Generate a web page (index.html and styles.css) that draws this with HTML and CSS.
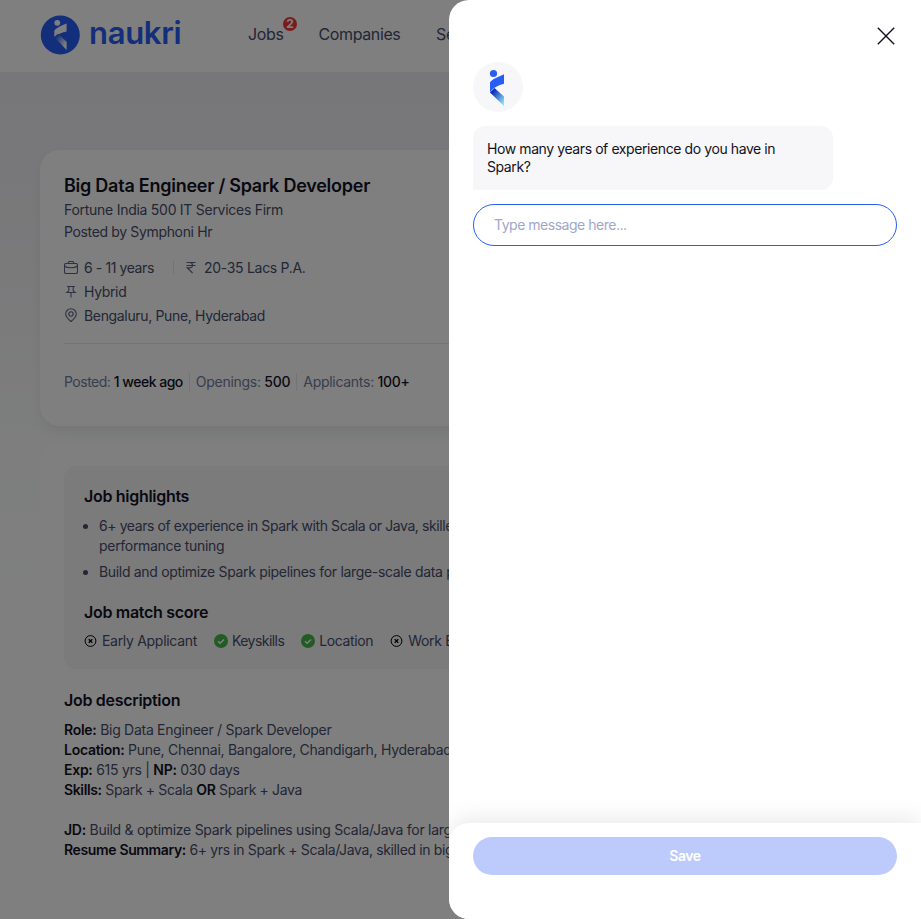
FILE: index.html
```html
<!DOCTYPE html>
<html lang="en">
<head>
<meta charset="utf-8">
<title>Big Data Engineer / Spark Developer</title>
<link rel="stylesheet" href="styles.css">
</head>
<body>
<svg class="defs" width="0" height="0">
  <defs>
    <linearGradient id="leg" x1="0" y1="0" x2="1" y2="1"><stop offset=".2" stop-color="#0a2cb8"/><stop offset=".9" stop-color="#8fe0f5"/></linearGradient>
    <linearGradient id="legLight" x1="0" y1="0" x2="1" y2="1"><stop offset=".15" stop-color="#275df5"/><stop offset=".8" stop-color="#fff"/></linearGradient>
    <symbol id="cross" viewBox="0 0 14 14"><circle cx="6.500" cy="7" r="5.400" fill="none" stroke="#000" stroke-width="1"/><path d="M4.700 5.200l3.600 3.600M8.300 5.200l-3.600 3.600" stroke="#000" stroke-width="1.300"/></symbol>
    <symbol id="check" viewBox="0 0 14 14"><circle cx="7" cy="7" r="7" fill="#47b749"/><path d="M4 7.200l2.100 2L10 5.400" fill="none" stroke="#fff" stroke-width="1.400"/></symbol>
  </defs>
</svg>
<div class="page">
  <header class="header">
    <div class="brand">
      <svg width="40" height="40" viewBox="0 0 40 40"><circle cx="20.300" cy="20" r="19.500" fill="#275df5"/><circle cx="17.300" cy="7.800" r="2.900" fill="#fff"/><path d="M14.300 22V15.500Q17 12 26.600 8.500V16.500Q18 18.500 14.300 22z" fill="#fff"/><path d="M14.300 22L18 18.800 26.600 26.700V35z" fill="url(#legLight)"/></svg>
      <span class="wordmark">naukri</span>
    </div>
    <nav class="nav">
      <a class="nav-jobs">Jobs<span class="badge">2</span></a>
      <a class="nav-companies">Companies</a>
      <a>Services</a>
    </nav>
  </header>
  <main class="content">
    <section class="card summary">
      <h1>Big Data Engineer / Spark Developer</h1>
      <p class="company">Fortune India 500 IT Services Firm</p>
      <p class="poster">Posted by Symphoni Hr</p>
      <div class="facts">
        <div class="fact">
          <svg width="14" height="14" viewBox="0 0 14 14"><rect x=".5" y="3.500" width="13" height="10" rx="1.500"/><path d="M4.300 3.500V2.500a1 1 0 0 1 1-1h3.400a1 1 0 0 1 1 1v1M.5 6C3 8.300 11 8.300 13.500 6"/></svg>
          <span class="exp">6 - 11 years</span><i class="rule"></i>
          <svg width="14" height="14" viewBox="0 0 14 14"><path d="M2.500 2.500h9M2.500 5.500h9M3 2.500h2.500c4 0 4 5.400 0 5.400H3.200L8.600 13"/></svg>
          <span class="salary">20-35 Lacs P.A.</span>
        </div>
        <div class="fact">
          <svg width="14" height="14" viewBox="0 0 14 14"><path d="M3 2.500h8M4.800 2.500v4.300L2.800 8.500h8.400L9.200 6.800V2.500M7 8.500V13.500"/></svg>
          <span class="mode">Hybrid</span>
        </div>
        <div class="fact">
          <svg width="14" height="14" viewBox="0 0 14 14"><path d="M7 13.500C4.500 11.400 1.700 9.200 1.700 6a5.300 5.300 0 0 1 10.600 0c0 3.200-2.800 5.400-5.300 7.500z"/><circle cx="7" cy="6" r="2.200"/></svg>
          <span class="places">Bengaluru, Pune, Hyderabad</span>
        </div>
      </div>
      <div class="stats">
        <span>Posted: <b>1 week ago</b></span><span>Openings: <b>500</b></span><span>Applicants: <b>100+</b></span>
      </div>
    </section>
    <section class="card details">
      <div class="highlights">
        <h2>Job highlights</h2>
        <ul>
          <li>6+ years of experience in Spark with Scala or Java, skilled in<br><span class="tail">performance tuning</span></li>
          <li>Build and optimize Spark pipelines for large-scale data processing</li>
        </ul>
        <h2>Job match score</h2>
        <div class="score">
          <span><svg width="14" height="14"><use href="#cross"/></svg>Early Applicant</span>
          <span class="keyskills"><svg width="14" height="14"><use href="#check"/></svg>Keyskills</span>
          <span class="location"><svg width="14" height="14"><use href="#check"/></svg>Location</span>
          <span><svg width="14" height="14"><use href="#cross"/></svg>Work Experience</span>
        </div>
      </div>
      <h2 class="jd-title">Job description</h2>
      <div class="jd">
        <p><b>Role:</b> Big Data Engineer / Spark Developer</p>
        <p><b>Location:</b> Pune, Chennai, Bangalore, Chandigarh, Hyderabad</p>
        <p><b>Exp:</b> 615 yrs | <b>NP:</b> 030 days</p>
        <p class="skills"><b>Skills:</b> Spark + Scala <b>OR</b> Spark + Java</p>
        <p class="gap"><b>JD:</b> Build &amp; optimize Spark pipelines using Scala/Java for large-scale data</p>
        <p class="resume"><b>Resume Summary:</b> 6+ yrs in Spark + Scala/Java, skilled in big data</p>
      </div>
    </section>
  </main>
</div>
<div class="overlay"></div>
<aside class="drawer">
  <div class="chat">
    <div class="close"><svg width="18" height="18" viewBox="0 0 18 18"><path d="M.8.8l16.400 16.400M17.200.8L.8 17.200" stroke="#121224" stroke-width="1.400"/></svg></div>
    <div class="avatar"><svg width="50" height="50" viewBox="0 0 50 50"><circle cx="20.500" cy="11.500" r="3.600" fill="#275df5"/><path d="M17 30.500l4.500-4.500L31 34.500v9.500z" fill="url(#leg)"/><path d="M17 30.500V20.500c2-3.500 8-5.500 14-8.300v9.500c-7 1.800-11 4.300-14 8.800z" fill="#275df5"/></svg></div>
    <p class="bubble">How many years of experience do you have in<br>Spark?</p>
    <input class="message" type="text" placeholder="Type message here...">
  </div>
  <footer class="actions"><button class="save">Save</button></footer>
</aside>
</body>
</html>
```
FILE: styles.css
```css
* { box-sizing: border-box; }
body { margin: 0; height: 919px; overflow: hidden; font-family: Inter, "Liberation Sans", sans-serif; font-size: 14px; color: #474d6a; letter-spacing: -.3px; }
h1, h2, p, ul { margin: 0; padding: 0; }
.defs { position: absolute; }
.page { height: 919px; overflow: hidden; white-space: nowrap; background: linear-gradient(#efeff5 72px, #f0f0f4 150px, #f7f7f9 330px, #fafcfb 440px, #fff 620px); }
.header { display: flex; align-items: center; height: 72px; padding: 0 40px; background: #fff; }
.brand { display: flex; align-items: center; gap: 9px; width: 208px; height: 40px; margin-bottom: 3px; }
.wordmark { font-size: 31px; font-weight: 600; color: #275df5; letter-spacing: -.3px; line-height: 40px; margin-top: -4px; }
.nav { display: flex; gap: 36px; font-size: 16px; line-height: 24px; margin-bottom: 5px; letter-spacing: -.38px; }
.nav-jobs { position: relative; width: 34.500px; }
.nav-companies { width: 81.500px; }
.badge { position: absolute; left: 35px; top: -5px; width: 14px; height: 14px; border-radius: 50%; background: #f03838; color: #fff; font-size: 12px; line-height: 14px; font-weight: 700; text-align: center; letter-spacing: 0; }
.content { padding: 78px 40px 0; }
.card { width: 840px; padding: 24px; border-radius: 20px; background: #fff; box-shadow: 0 6px 12px rgba(30, 10, 58, .06); }
.summary { height: 276px; margin-bottom: 16px; }
.details { height: 600px; box-shadow: none; }
h1 { font-size: 18px; line-height: 24px; font-weight: 600; color: #121224; letter-spacing: -.25px; }
.company { margin-top: 1px; line-height: 22px; letter-spacing: -.27px; }
.poster { line-height: 22px; letter-spacing: -.35px; }
.facts { margin-top: 12px; padding-bottom: 16px; border-bottom: 1px solid #e7e7f1; }
.fact { display: flex; align-items: center; gap: 6px; height: 24px; }
.fact svg { fill: none; stroke: #5c6486; stroke-width: 1.100; }
.exp { width: 70px; letter-spacing: -.4px; }
.mode, .places { letter-spacing: -.34px; }
.rule { width: 1px; height: 14px; margin: 0 4px 0 13px; background: #e7e7f1; }
.stats { display: flex; margin-top: 29px; line-height: 18px; color: #717b9e; letter-spacing: -.5px; }
.stats span + span { border-left: 1px solid #e7e7f1; margin-left: 6px; padding-left: 6px; letter-spacing: -.28px; }
.stats b { font-weight: 500; color: #121224; }
.highlights { height: 203px; padding: 20px; border-radius: 12px; background: #f6f6f8; }
h2 { font-size: 16px; line-height: 20px; font-weight: 600; color: #121224; letter-spacing: -.3px; }
.highlights ul { margin: 10px 0 20px; padding-left: 15px; line-height: 20px; list-style: none; }
.highlights li { position: relative; margin-bottom: 6px; letter-spacing: -.32px; }
.highlights li:first-child { letter-spacing: -.41px; }
.highlights .tail { letter-spacing: -.3px; }
.highlights li::before { content: ""; position: absolute; left: -16px; top: 8px; width: 5px; height: 5px; border-radius: 50%; background: #474d6a; }
.score { display: flex; gap: 17px; margin-top: 9px; line-height: 20px; }
.score span { display: flex; align-items: center; gap: 4px; }
.score .keyskills { letter-spacing: -.55px; }
.score .location { letter-spacing: -.38px; }
.jd-title { margin-top: 21px; }
.jd { margin-top: 10px; line-height: 20px; letter-spacing: -.28px; }
.jd b { font-weight: 600; color: #121224; }
.jd .skills { letter-spacing: -.36px; }
.jd .resume { letter-spacing: -.36px; }
.gap { margin-top: 20px; }
.overlay { position: fixed; inset: 0; background: rgba(0, 0, 0, .5); }
.drawer { position: fixed; top: 0; right: 0; bottom: 0; width: 472px; display: flex; flex-direction: column; overflow: hidden; border-radius: 20px 0 0 20px; background: #fff; }
.chat { flex: 1; padding: 27px 24px; }
.close { display: flex; justify-content: flex-end; height: 35px; padding-right: 2.500px; }
.avatar { width: 50px; height: 50px; border-radius: 50%; background: #f7f7f9; }
.bubble { width: 360px; height: 64px; margin-top: 14px; padding: 14px; border-radius: 12px 12px 12px 0; background: #f7f7f9; line-height: 18px; color: #121224; letter-spacing: -.41px; }
.message { display: block; width: 424px; height: 42px; margin-top: 14px; padding: 0 20px 1px; border: 1px solid #275df5; border-radius: 21px; outline: 0; font: inherit; letter-spacing: -.48px; background: #fff; }
.message::placeholder { color: #a0a7c8; }
.actions { height: 96px; padding: 14px 24px; border-radius: 20px 0 0 20px; background: #fff; box-shadow: 0 -6px 22px rgba(0, 0, 0, .08); }
.save { width: 424px; height: 38px; padding-bottom: 2px; border: 0; border-radius: 19px; background: #bccbfc; color: #fff; font: 600 14px Inter, sans-serif; letter-spacing: -.45px; }
```
